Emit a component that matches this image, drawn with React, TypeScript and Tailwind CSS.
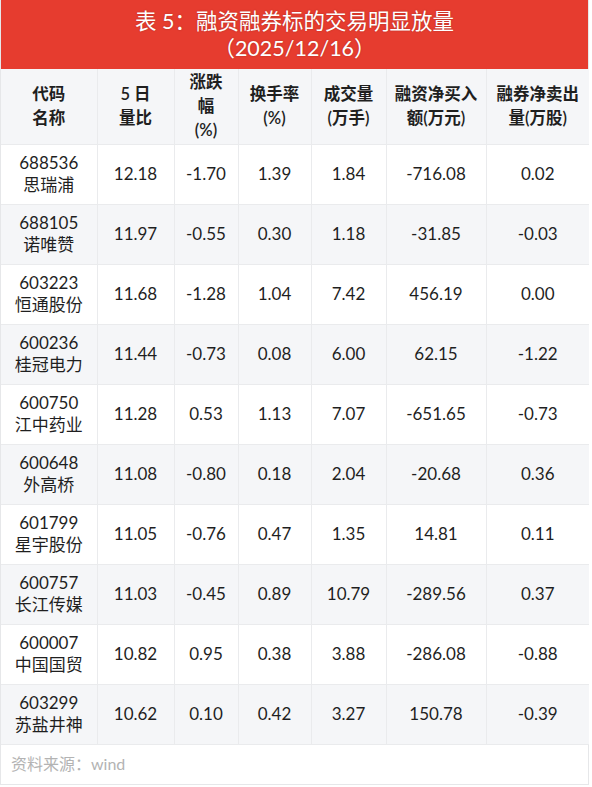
const rows = [
  ["688536", "思瑞浦", "12.18", "-1.70", "1.39", "1.84", "-716.08", "0.02"],
  ["688105", "诺唯赞", "11.97", "-0.55", "0.30", "1.18", "-31.85", "-0.03"],
  ["603223", "恒通股份", "11.68", "-1.28", "1.04", "7.42", "456.19", "0.00"],
  ["600236", "桂冠电力", "11.44", "-0.73", "0.08", "6.00", "62.15", "-1.22"],
  ["600750", "江中药业", "11.28", "0.53", "1.13", "7.07", "-651.65", "-0.73"],
  ["600648", "外高桥", "11.08", "-0.80", "0.18", "2.04", "-20.68", "0.36"],
  ["601799", "星宇股份", "11.05", "-0.76", "0.47", "1.35", "14.81", "0.11"],
  ["600757", "长江传媒", "11.03", "-0.45", "0.89", "10.79", "-289.56", "0.37"],
  ["600007", "中国国贸", "10.82", "0.95", "0.38", "3.88", "-286.08", "-0.88"],
  ["603299", "苏盐井神", "10.62", "0.10", "0.42", "3.27", "150.78", "-0.39"],
]

const headers: string[][] = [
  ["代码", "名称"],
  ["5 日", "量比"],
  ["涨跌", "幅", "(%)"],
  ["换手率", "(%)"],
  ["成交量", "(万手)"],
  ["融资净买入", "额(万元)"],
  ["融券净卖出", "量(万股)"],
]

const widths = ["w-[96px]", "w-[77px]", "w-[64px]", "w-[73px]", "w-[75px]", "w-[100px]", "w-[103px]"]

export default function App() {
  return (
    <div className="w-[589px] bg-white border-x border-b border-[#e6e7e9] font-['Lato','Noto_Sans_CJK_SC',sans-serif] text-[#1f1f1f]">
      <div className="h-[69px] bg-[#e63c2f] flex flex-col items-center justify-center text-white text-[21.5px] leading-[27px] [text-shadow:0_0_2px_rgba(0,0,0,0.25)]">
        <div>表 5：融资融券标的交易明显放量</div>
        <div>（2025/12/16）</div>
      </div>
      <table className="w-full border-collapse table-fixed">
        <thead>
          <tr className="bg-[#f5f6f8] h-[75px]">
            {headers.map((h, i) => (
              <th
                key={i}
                className={`${widths[i]} border-r border-b border-[#eaebed] last:border-r-0 text-[16.5px] leading-[24px] font-semibold text-center align-middle`}
              >
                {h.map((l, j) => (
                  <div key={j}>{l}</div>
                ))}
              </th>
            ))}
          </tr>
        </thead>
        <tbody>
          {rows.map((r, i) => (
            <tr key={r[0]} className={`h-[60px] ${i % 2 ? "bg-[#f5f6f8]" : "bg-white"}`}>
              <td className="border-r border-b border-[#eaebed] text-center text-[17px] leading-[22px]">
                <div>{r[0]}</div>
                <div>{r[1]}</div>
              </td>
              {r.slice(2).map((v, j) => (
                <td
                  key={j}
                  className="border-r border-b border-[#eaebed] last:border-r-0 text-center text-[17px]"
                >
                  {v}
                </td>
              ))}
            </tr>
          ))}
        </tbody>
      </table>
      <div className="h-[39px] flex items-center pl-[10px] text-[16px] text-[#b3b3b3]">资料来源：wind</div>
    </div>
  )
}
